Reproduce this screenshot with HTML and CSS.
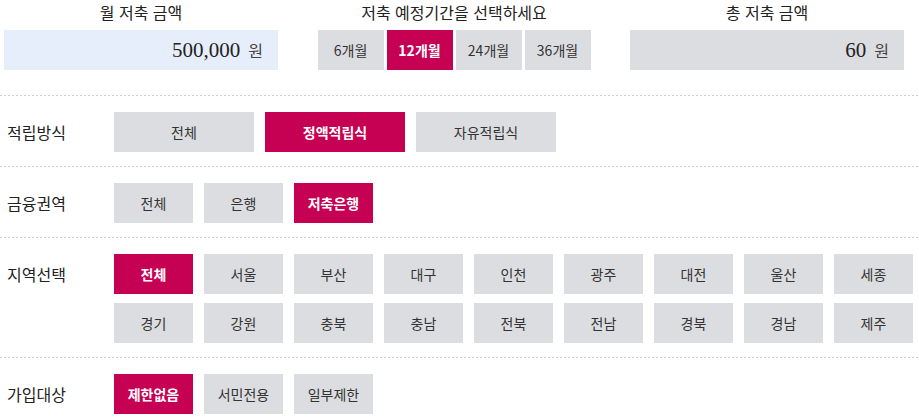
FILE: index.html
```html
<!DOCTYPE html>
<html lang="ko">
<head>
<meta charset="UTF-8">
<meta name="viewport" content="width=device-width, initial-scale=1.0">
<title>적금 비교</title>
<link rel="stylesheet" href="styles.css">
</head>
<body>
    <div class="top">
        <div class="col">
            <div class="col-title">월 저축 금액</div>
            <div class="amount amount-input">500,000<span class="won">원</span></div>
        </div>
        <div class="col">
            <div class="col-title">저축 예정기간을 선택하세요</div>
            <div class="periods">
                <button class="btn period">6개월</button>
                <button class="btn period on">12개월</button>
                <button class="btn period">24개월</button>
                <button class="btn period">36개월</button>
            </div>
        </div>
        <div class="col">
            <div class="col-title">총 저축 금액</div>
            <div class="amount amount-total">60<span class="won">원</span></div>
        </div>
    </div>

    <div class="row">
        <div class="row-label">적립방식</div>
        <div class="opts">
            <button class="btn wide">전체</button>
            <button class="btn wide on">정액적립식</button>
            <button class="btn wide">자유적립식</button>
        </div>
    </div>

    <div class="row">
        <div class="row-label">금융권역</div>
        <div class="opts">
            <button class="btn">전체</button>
            <button class="btn">은행</button>
            <button class="btn on">저축은행</button>
        </div>
    </div>

    <div class="row">
        <div class="row-label">지역선택</div>
        <div class="opts">
            <button class="btn on">전체</button>
            <button class="btn">서울</button>
            <button class="btn">부산</button>
            <button class="btn">대구</button>
            <button class="btn">인천</button>
            <button class="btn">광주</button>
            <button class="btn">대전</button>
            <button class="btn">울산</button>
            <button class="btn">세종</button>
            <button class="btn">경기</button>
            <button class="btn">강원</button>
            <button class="btn">충북</button>
            <button class="btn">충남</button>
            <button class="btn">전북</button>
            <button class="btn">전남</button>
            <button class="btn">경북</button>
            <button class="btn">경남</button>
            <button class="btn">제주</button>
        </div>
    </div>

    <div class="row">
        <div class="row-label">가입대상</div>
        <div class="opts">
            <button class="btn on">제한없음</button>
            <button class="btn">서민전용</button>
            <button class="btn">일부제한</button>
        </div>
    </div>
</body>
</html>
```

FILE: styles.css
```css
body {
    margin: 0;
    padding: 0;
    background-color: #fff;
    color: #222;
    font-family: "Noto Sans CJK KR", "Noto Sans", sans-serif;
}
.top {
    display: grid;
    grid-template-columns: 274px 274px 274px;
    column-gap: 39px;
    padding: 0 0 25px 4px;
}
.col-title {
    height: 24px;
    margin-bottom: 6px;
    font-size: 16px;
    line-height: 24px;
    text-align: center;
}
.amount {
    display: flex;
    justify-content: flex-end;
    align-items: baseline;
    height: 40px;
    padding: 0 15px 0 0;
    box-sizing: border-box;
    font-family: "Liberation Serif", serif;
    font-size: 21px;
    line-height: 40px;
    color: #222;
}
.amount-input {
    background-color: #e7eefb;
}
.amount-total {
    background-color: #dcdde1;
}
.won {
    margin-left: 8px;
    font-family: "Noto Sans CJK KR", sans-serif;
    font-size: 16px;
    color: #444;
}
.periods {
    display: flex;
    justify-content: center;
    gap: 3px;
}
.btn {
    width: 79px;
    height: 40px;
    padding: 0;
    border: none;
    border-radius: 0;
    background-color: #dcdde1;
    color: #333;
    font-family: "Noto Sans CJK KR", sans-serif;
    font-size: 14px;
    line-height: 40px;
    cursor: pointer;
}
.btn.period {
    width: 66px;
}
.btn.wide {
    width: 140px;
}
.btn.on {
    background-color: #c60052;
    color: #fff;
    font-weight: bold;
}
.row {
    display: flex;
    padding: 17px 0 14px;
    background-image: repeating-linear-gradient(to right, #cfcfcf 0 2px, transparent 2px 4px);
    background-size: 100% 1px;
    background-repeat: no-repeat;
    background-position: 0 0;
}
.row:last-child {
    padding-bottom: 3px;
}
.row-label {
    width: 114px;
    padding-left: 7px;
    box-sizing: border-box;
    flex-shrink: 0;
    font-size: 16px;
    line-height: 40px;
}
.opts {
    display: flex;
    flex-wrap: wrap;
    gap: 9px 11px;
    flex: 1;
}
```
